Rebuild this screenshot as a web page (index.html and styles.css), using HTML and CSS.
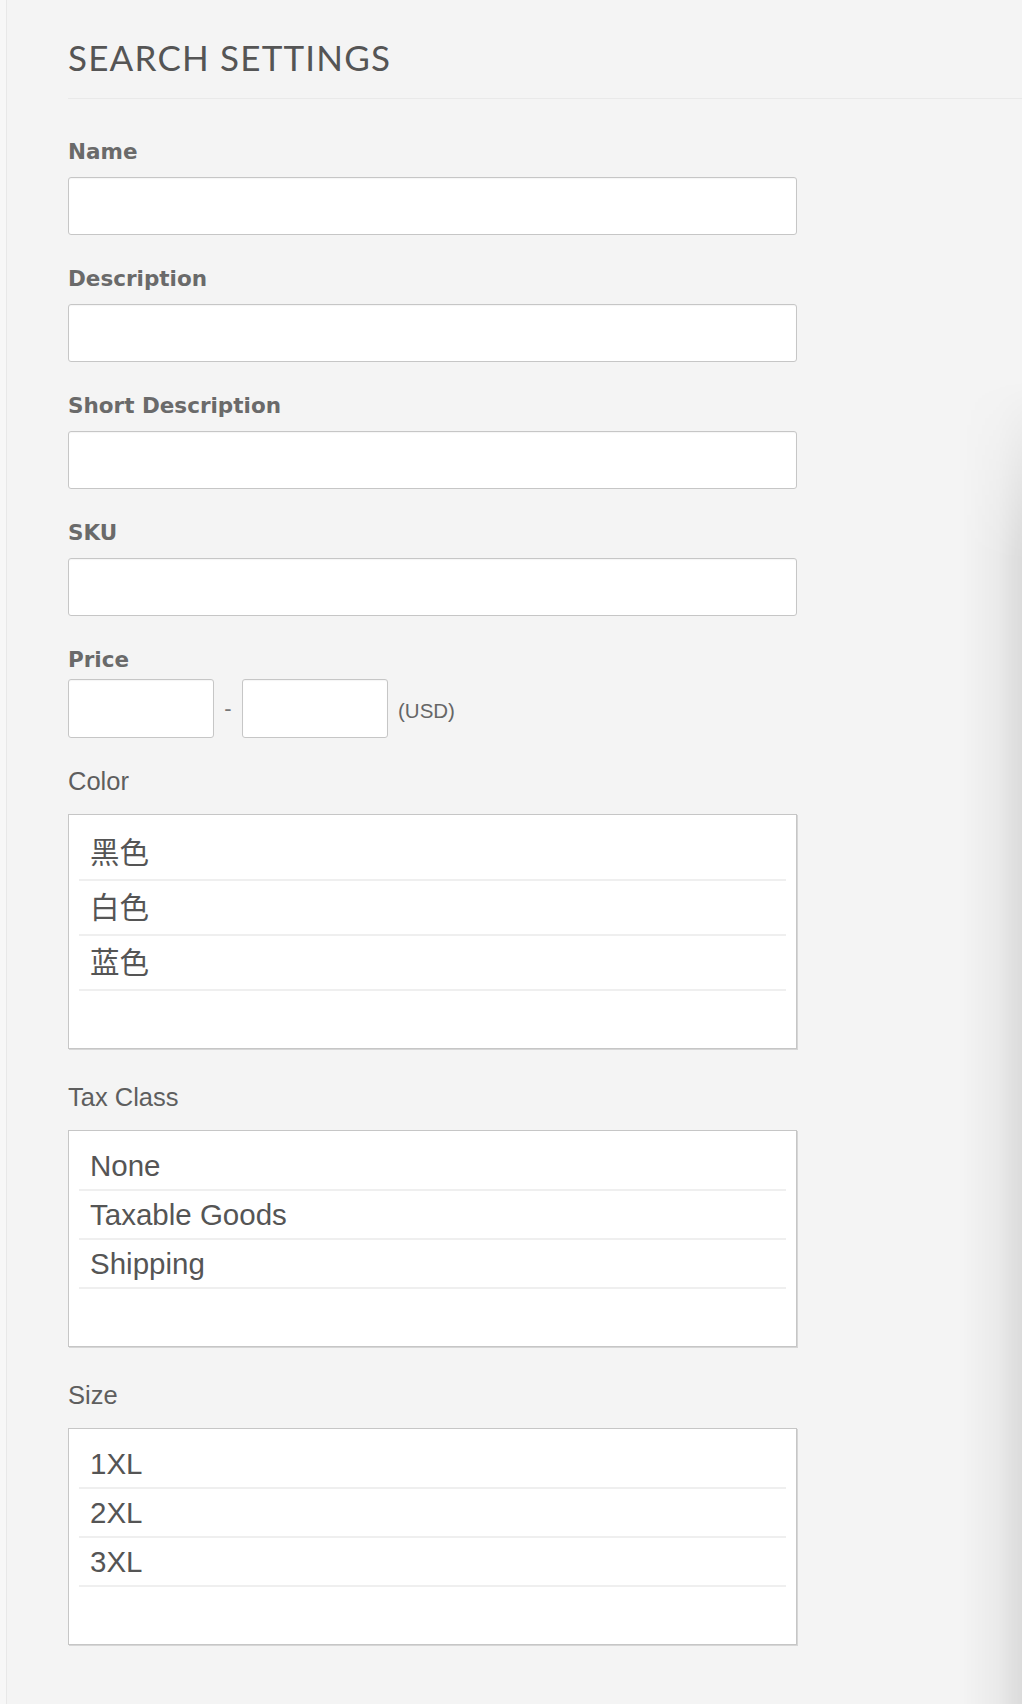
FILE: index.html
```html
<!DOCTYPE html>
<html lang="en">
<head>
<meta charset="utf-8">
<title>Search Settings</title>
<link rel="stylesheet" href="styles.css">
</head>
<body>
<div class="page">
  <header class="header">
    <h1 class="title">SEARCH SETTINGS</h1>
  </header>
  <form class="form">
    <div class="field">
      <label class="label">Name</label>
      <input class="input" type="text">
    </div>
    <div class="field">
      <label class="label">Description</label>
      <input class="input" type="text">
    </div>
    <div class="field">
      <label class="label">Short Description</label>
      <input class="input" type="text">
    </div>
    <div class="field">
      <label class="label">SKU</label>
      <input class="input" type="text">
    </div>
    <div class="field field-price">
      <label class="label label-tight">Price</label>
      <div class="price-row">
        <input class="input input-price" type="text">
        <span class="dash">-</span>
        <input class="input input-price" type="text">
        <span class="currency">(USD)</span>
      </div>
    </div>
    <div class="field field-multi">
      <label class="label label-multi">Color</label>
      <ul class="listbox listbox-tall">
        <li class="option">黑色</li>
        <li class="option">白色</li>
        <li class="option">蓝色</li>
      </ul>
    </div>
    <div class="field field-multi">
      <label class="label label-multi">Tax Class</label>
      <ul class="listbox">
        <li class="option">None</li>
        <li class="option">Taxable Goods</li>
        <li class="option">Shipping</li>
      </ul>
    </div>
    <div class="field field-multi">
      <label class="label label-multi">Size</label>
      <ul class="listbox">
        <li class="option">1XL</li>
        <li class="option">2XL</li>
        <li class="option">3XL</li>
      </ul>
    </div>
  </form>
  <div class="side-shadow"></div>
</div>
</body>
</html>
```
FILE: styles.css
```css
html {
  background: #f7f7f7;
  overflow: hidden;
}
body {
  margin: 0;
  overflow: hidden;
  font-family: "Liberation Sans", Arial, "Noto Sans CJK SC", sans-serif;
  color: #555;
}
.page {
  position: relative;
  margin-left: 6px;
  border-left: 1px solid #e8e8e8;
  background: #f4f4f4;
  height: 1704px;
  padding-left: 61px;
  box-sizing: border-box;
  overflow: hidden;
}
.header {
  padding-top: 37px;
  border-bottom: 1px solid #e9e9e9;
}
.title {
  margin: 0 0 21px;
  font-family: "Lato", "Liberation Sans", sans-serif;
  font-weight: 400;
  font-size: 35px;
  line-height: 40px;
  color: #555;
  letter-spacing: 1.2px;
}
.form {
  width: 729px;
  padding-top: 38px;
}
.field {
  margin-bottom: 29px;
}
.label {
  display: block;
  font-family: "DejaVu Sans", sans-serif;
  font-weight: 700;
  font-size: 21.5px;
  line-height: 30px;
  color: #6a6a6a;
  margin-bottom: 10px;
}
.label-tight {
  margin-bottom: 4px;
}
.input {
  display: block;
  width: 100%;
  height: 58px;
  box-sizing: border-box;
  border: 1px solid #c6c6c6;
  border-radius: 3px;
  background: #fff;
  box-shadow: inset 0 1px 1px rgba(0, 0, 0, 0.04);
  margin: 0;
  padding: 0 10px;
  font: inherit;
}
.price-row {
  display: flex;
  align-items: center;
}
.input-price {
  width: 146px;
  height: 59px;
}
.dash {
  width: 28px;
  text-align: center;
  font-size: 22px;
  color: #777;
}
.currency {
  margin-left: 10px;
  font-size: 20.5px;
  color: #666;
  padding-top: 4px;
}
.field-price {
  margin-bottom: 28px;
}
.field-multi {
  margin-bottom: 33px;
}
.label-multi {
  font-family: "Liberation Sans", Arial, sans-serif;
  font-weight: 400;
  font-size: 25.5px;
  color: #5e5e5e;
  margin-bottom: 18px;
}
.listbox {
  list-style: none;
  margin: 0;
  padding: 11px 10px 57px;
  background: #fff;
  border: 1px solid #c6c6c6;
  box-shadow: 1px 1px 0 #d6d6d6;
}
.option {
  padding: 7px 10px 7px 11px;
  border-bottom: 2px solid #efefef;
  font-family: "Liberation Sans", Arial, "Noto Sans CJK SC", sans-serif;
  font-size: 29.5px;
  line-height: 33px;
  color: #555;
}
.listbox-tall .option {
  padding-top: 10px;
  padding-bottom: 10px;
}
.side-shadow {
  position: absolute;
  top: 380px;
  right: 0;
  bottom: 0;
  width: 60px;
  background: linear-gradient(to right, rgba(0, 0, 0, 0), rgba(0, 0, 0, 0.04) 60%, rgba(0, 0, 0, 0.1));
  -webkit-mask-image: linear-gradient(to bottom, transparent, #000 180px);
  mask-image: linear-gradient(to bottom, transparent, #000 180px);
  pointer-events: none;
}
```
